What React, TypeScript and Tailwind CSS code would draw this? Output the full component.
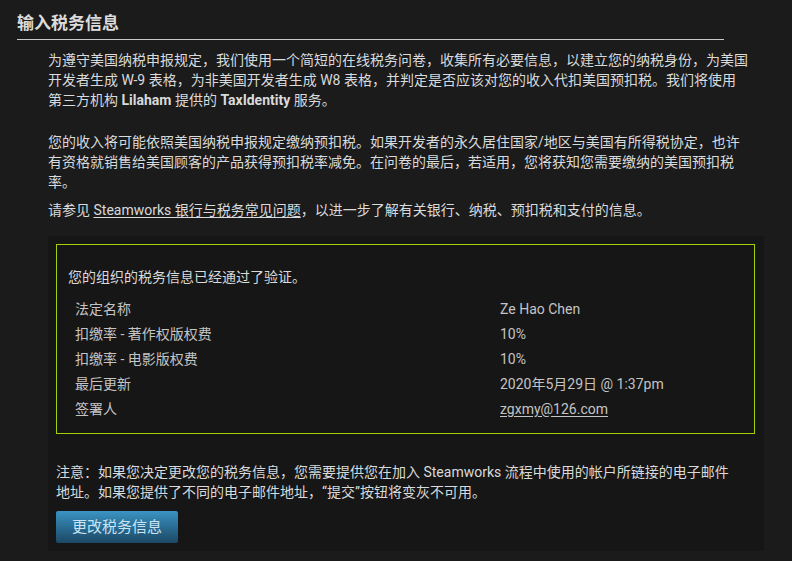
import React from "react";

const rows = [
  { label: "法定名称", value: "Ze Hao Chen" },
  { label: "扣缴率 - 著作权版权费", value: "10%" },
  { label: "扣缴率 - 电影版权费", value: "10%" },
  { label: "最后更新", value: "2020年5月29日 @ 1:37pm" },
  { label: "签署人", value: "zgxmy@126.com", link: true },
];

export default function App() {
  return (
    <div
      className="min-h-[561px] w-full bg-[#1b1b1b] text-[#d9dadb] text-[14px] leading-[20px]"
      style={{ fontFamily: 'Roboto, "Noto Sans CJK SC", sans-serif' }}
    >
      <div className="pt-[11px]">
        <div className="ml-[17px] w-[707px] border-b border-[#c8c8c8] pb-[4px]">
          <h2 className="text-[17px] font-bold leading-[24px] text-[#dcdcdc]">
            输入税务信息
          </h2>
        </div>

        <div className="ml-[48px] w-[716px]">
          <p className="mt-[10px]">
            为遵守美国纳税申报规定，我们使用一个简短的在线税务问卷，收集所有必要信息，以建立您的纳税身份，为美国
            <br />
            开发者生成 W-9 表格，为非美国开发者生成 W8 表格，并判定是否应该对您的收入代扣美国预扣税。我们将使用
            <br />
            第三方机构 <b>Lilaham</b> 提供的 <b>TaxIdentity</b> 服务。
          </p>

          <p className="mt-[22px]">
            您的收入将可能依照美国纳税申报规定缴纳预扣税。如果开发者的永久居住国家/地区与美国有所得税协定，也许
            <br />
            有资格就销售给美国顾客的产品获得预扣税率减免。在问卷的最后，若适用，您将获知您需要缴纳的美国预扣税
            <br />
            率。
          </p>

          <p className="mt-[8px]">
            请参见{" "}
            <a href="#" className="underline underline-offset-2">
              Steamworks 银行与税务常见问题
            </a>
            ，以进一步了解有关银行、纳税、预扣税和支付的信息。
          </p>

          <div className="mt-[16px] bg-[#161616] p-[8px] pr-[9px]">
            <div className="border border-[#a4d007] pl-[11px] pr-4 pt-[21px] pb-[12px]">
              <p className="leading-[22px]">您的组织的税务信息已经通过了验证。</p>
              <div className="mt-[8px] pl-[7px] text-[#c4c4c4]">
                {rows.map((r) => (
                  <div key={r.label} className="flex h-[25px] items-center">
                    <div className="w-[425px]">{r.label}</div>
                    <div>
                      {r.link ? (
                        <a href="#" className="underline underline-offset-2">
                          {r.value}
                        </a>
                      ) : (
                        r.value
                      )}
                    </div>
                  </div>
                ))}
              </div>
            </div>

            <p className="mt-[28px]">
              注意：如果您决定更改您的税务信息，您需要提供您在加入 Steamworks 流程中使用的帐户所链接的电子邮件
              <br />
              地址。如果您提供了不同的电子邮件地址，“提交”按钮将变灰不可用。
            </p>

            <button className="mt-[9px] h-[32px] w-[122px] rounded-[2px] bg-gradient-to-b from-[#3a94c4] to-[#1c4866] text-[15px] text-[#c9e4f5]">
              更改税务信息
            </button>
          </div>
        </div>
      </div>
    </div>
  );
}
